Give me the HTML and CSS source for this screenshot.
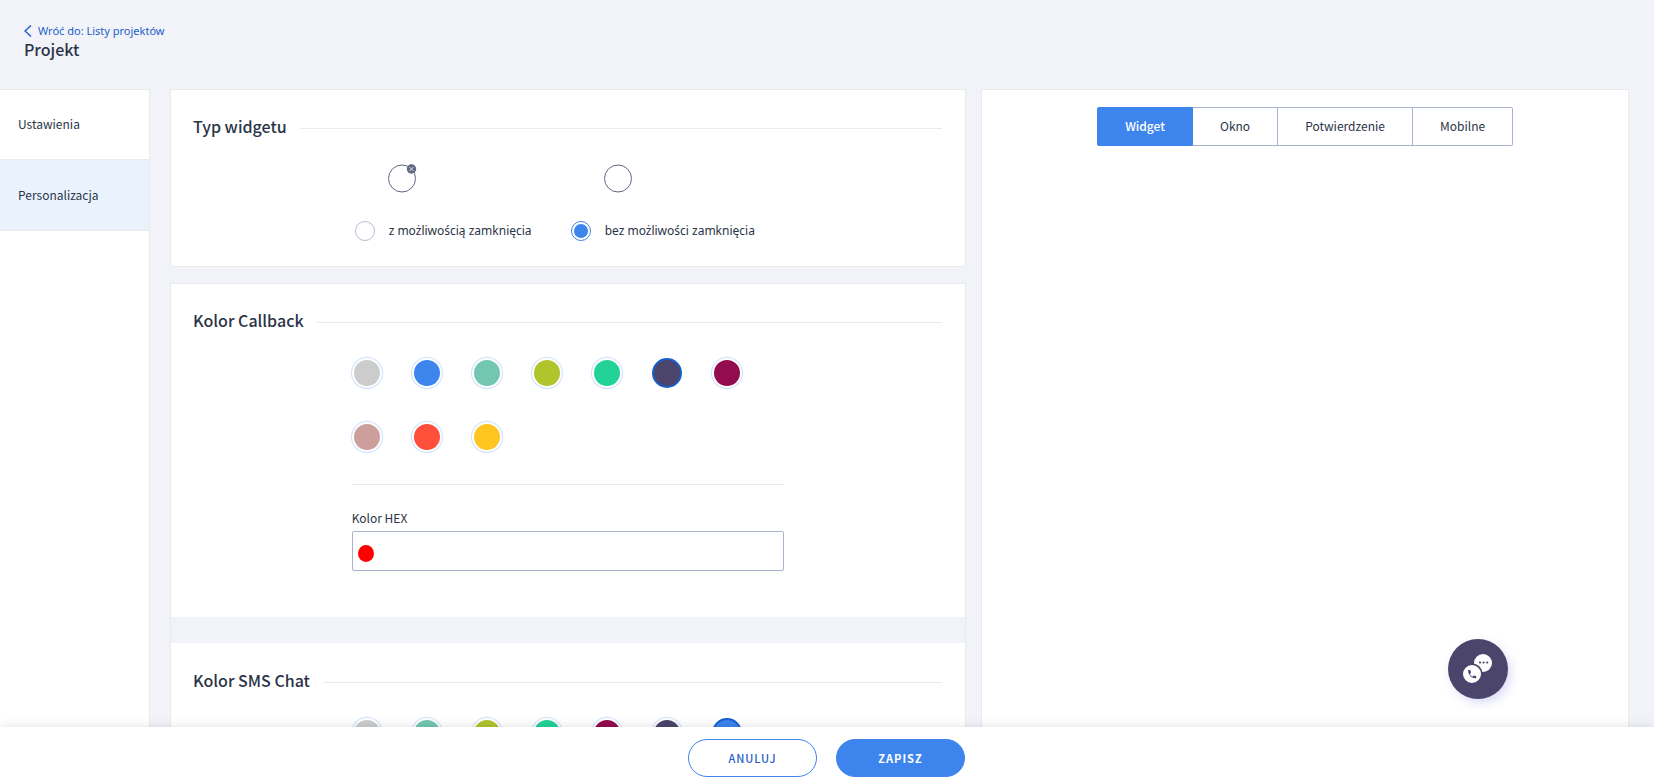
FILE: index.html
```html
<!DOCTYPE html>
<html lang="pl">
<head>
  <meta charset="UTF-8">
  <meta name="viewport" content="width=device-width, initial-scale=1">
  <title>Projekt</title>
  <link rel="stylesheet" href="styles.css">
</head>
<body>
  <div class="page">
    <header class="header">
      <a class="back" href="#">
        <svg class="back-icon" width="8" height="12" viewBox="0 0 8 12"><path d="M7 0.5 L1 6 L7 11.5" fill="none" stroke="currentColor" stroke-width="1.4"/></svg>
        Wróć do: Listy projektów
      </a>
      <h1 class="header-title">Projekt</h1>
    </header>

    <div class="content">
      <nav class="sidebar">
        <a class="sidebar-item" href="#">Ustawienia</a>
        <a class="sidebar-item active" href="#">Personalizacja</a>
      </nav>

      <main class="settings">
        <div class="card">
          <section class="section">
            <h2 class="section-title">Typ widgetu</h2>
            <div class="section-body types">
              <label class="type">
                <svg class="type-icon" width="30" height="30" viewBox="0 0 30 30">
                  <circle cx="15" cy="15.5" r="13.5" fill="none" stroke="#5f6782"/>
                  <circle cx="24.5" cy="6" r="4.7" fill="#5f6782"/>
                  <path d="M22.5 4 L26.5 8 M26.5 4 L22.5 8" stroke="#fff" stroke-width="0.8"/>
                </svg>
                <input class="radio" type="radio" name="type">
                <span class="type-name">z możliwością zamknięcia</span>
              </label>
              <label class="type">
                <svg class="type-icon" width="30" height="30" viewBox="0 0 30 30">
                  <circle cx="15" cy="15.5" r="13.5" fill="none" stroke="#5f6782"/>
                </svg>
                <input class="radio" type="radio" name="type" checked>
                <span class="type-name">bez możliwości zamknięcia</span>
              </label>
            </div>
          </section>
        </div>

        <div class="card">
          <section class="section">
            <h2 class="section-title">Kolor Callback</h2>
            <div class="section-body">
              <div class="swatches">
                <input class="swatch gray" type="radio" name="callback" aria-label="#cccccc">
                <input class="swatch blue" type="radio" name="callback" aria-label="#3d84ed">
                <input class="swatch teal" type="radio" name="callback" aria-label="#73c6b1">
                <input class="swatch lime" type="radio" name="callback" aria-label="#b0c42c">
                <input class="swatch green" type="radio" name="callback" aria-label="#23d297">
                <input class="swatch violet" type="radio" name="callback" aria-label="#4b456c" checked>
                <input class="swatch plum" type="radio" name="callback" aria-label="#920c4f">
                <input class="swatch rose" type="radio" name="callback" aria-label="#cc9e9c">
                <input class="swatch red" type="radio" name="callback" aria-label="#ff4e39">
                <input class="swatch yellow" type="radio" name="callback" aria-label="#ffc520">
              </div>
              <div class="hex">
                <label class="hex-label" for="hex">Kolor HEX</label>
                <div class="hex-field">
                  <span class="hex-preview"></span>
                  <input class="hex-input" type="text" id="hex">
                </div>
              </div>
            </div>
          </section>
          <div class="divider"></div>
          <section class="section">
            <h2 class="section-title">Kolor SMS Chat</h2>
            <div class="section-body">
              <div class="swatches">
                <input class="swatch gray" type="radio" name="sms" aria-label="#cccccc">
                <input class="swatch teal" type="radio" name="sms" aria-label="#73c6b1">
                <input class="swatch lime" type="radio" name="sms" aria-label="#b0c42c">
                <input class="swatch green" type="radio" name="sms" aria-label="#23d297">
                <input class="swatch plum" type="radio" name="sms" aria-label="#920c4f">
                <input class="swatch violet" type="radio" name="sms" aria-label="#4b456c">
                <input class="swatch blue" type="radio" name="sms" aria-label="#3d84ed" checked>
              </div>
            </div>
          </section>
        </div>
      </main>

      <aside class="preview">
        <div class="tabs">
          <button class="tab active" type="button">Widget</button>
          <button class="tab" type="button">Okno</button>
          <button class="tab" type="button">Potwierdzenie</button>
          <button class="tab" type="button">Mobilne</button>
        </div>
        <button class="widget" type="button" aria-label="Widget">
          <svg width="60" height="60" viewBox="0 0 60 60">
            <circle cx="35" cy="24" r="9" fill="#fff"/>
            <circle cx="32" cy="23.5" r="1.1" fill="#4b456c"/>
            <circle cx="35.6" cy="23.5" r="1.1" fill="#4b456c"/>
            <circle cx="39.2" cy="23.5" r="1.1" fill="#4b456c"/>
            <circle cx="24" cy="35" r="9.8" fill="#fff" stroke="#4b456c" stroke-width="1.6"/>
            <path d="M20 31 L22.4 31 L23 34 L21.8 35 Q22.8 37 24.6 37.7 L25.6 36.4 L28.2 37 L28.2 39.2 Q25 39.8 22.4 37.2 Q19.8 34.4 20 31 Z" fill="#4b456c"/>
          </svg>
        </button>
      </aside>
    </div>

    <footer class="footer">
      <button class="btn btn-outline" type="button">ANULUJ</button>
      <button class="btn btn-primary" type="button">ZAPISZ</button>
    </footer>
  </div>
</body>
</html>
```
FILE: styles.css
```css
* {
  box-sizing: border-box;
}
body {
  margin: 0;
  font-family: "Noto Sans CJK SC", "Noto Sans", sans-serif;
  font-size: 12px;
  line-height: 20px;
  color: #2b3447;
  background-color: #f2f3f8;
}
button, input {
  font: inherit;
  color: inherit;
  margin: 0;
}
a {
  color: inherit;
  text-decoration: none;
}
.page {
  display: flex;
  flex-direction: column;
  height: 100vh;
  overflow: hidden;
}

/* header */
.header {
  flex: none;
  padding: 23px 24px 30px;
}
.back {
  display: flex;
  align-items: center;
  gap: 6px;
  font-size: 11px;
  line-height: 16px;
  color: #1b60c9;
}
/* these strings need the full Polish alphabet */
.back, .type-name {
  font-family: "Noto Sans", sans-serif;
}
.header-title {
  margin: 0;
  font-size: 16px;
  font-weight: 500;
  line-height: 20px;
}

/* columns */
.content {
  flex: 1;
  min-height: 0;
  display: grid;
  grid-template-columns: 170px 55fr 45fr;
  grid-template-rows: minmax(0, 1fr);
  padding-right: 9px;
}
.sidebar {
  margin-right: 20px;
  background-color: #fff;
  border: solid #e8eaec;
  border-width: 1px 1px 0 0;
}
.sidebar-item {
  display: block;
  padding: 24px 18px 25px;
  border-bottom: 1px solid #e8eaec;
}
.sidebar-item.active {
  padding: 25px 18px;
  background-color: #eaf3fd;
}
.settings {
  min-width: 0;
  padding-right: 15px;
}
.card {
  margin-bottom: 16px;
  background-color: #fff;
  border: 1px solid #e8eaec;
}
.section {
  padding: 24px 23px 25px 22px;
}
.section-title {
  display: flex;
  align-items: center;
  gap: 13px;
  margin: 0;
  padding-bottom: 4px;
  font-size: 16px;
  font-weight: 500;
  line-height: 24px;
}
.section-title::after {
  content: "";
  flex: 1;
  margin-top: 4px;
  border-top: 1px solid #e8eaec;
}
.section-body {
  width: 432px;
  max-width: 100%;
  margin: 0 auto;
}
.divider {
  height: 26px;
  background-color: #f2f3f8;
}
.divider + .section {
  padding-top: 25px;
}

/* widget type */
.types {
  display: grid;
  grid-template-columns: 1fr 1fr;
  padding-top: 21px;
}
.type {
  display: grid;
  grid-template-columns: 20px 1fr;
  align-items: center;
  gap: 28px 14px;
  padding-left: 3px;
  white-space: nowrap;
  cursor: pointer;
}
.type-icon {
  grid-column: 2;
  margin-left: -2px;
}
.radio {
  appearance: none;
  width: 20px;
  height: 20px;
  padding: 2px;
  border: 1px solid #b5bdd6;
  border-radius: 50%;
}
.radio:checked {
  border-color: #3d84ed;
  background: #3d84ed content-box;
}

/* colors */
.swatches {
  display: grid;
  grid-template-columns: repeat(auto-fill, 60px);
  row-gap: 38px;
  padding: 24px 0 34px 2px;
}
.swatch {
  appearance: none;
  width: 26px;
  height: 26px;
  border-radius: 50%;
  box-shadow: 0 0 0 2px #fff, 0 0 1px 3px #cbdffb;
  cursor: pointer;
}
.swatch:checked {
  box-shadow: 0 0 0 2px #1660cc;
}
.gray { background-color: #ccc; }
.blue { background-color: #3d84ed; }
.teal { background-color: #73c6b1; }
.lime { background-color: #b0c42c; }
.green { background-color: #23d297; }
.violet { background-color: #4b456c; }
.plum { background-color: #920c4f; }
.rose { background-color: #cc9e9c; }
.red { background-color: #ff4e39; }
.yellow { background-color: #ffc520; }

.hex {
  padding: 23px 0 21px;
  border-top: 1px solid #e8eaec;
}
.hex-label {
  display: block;
  margin-bottom: 3px;
}
.hex-field {
  display: flex;
  align-items: center;
  gap: 8px;
  height: 40px;
  padding: 0 5px;
  border: 1px solid #a9b3cf;
  border-radius: 2px;
}
.hex-preview {
  width: 16px;
  height: 17px;
  margin-top: 4px;
  border-radius: 50%;
  background-color: #f00;
}
.hex-input {
  flex: 1;
  min-width: 0;
  height: 36px;
  border: 0;
  outline: 0;
  background: none;
}

/* preview */
.preview {
  position: relative;
  margin-right: 16px;
  padding-top: 17px;
  background-color: #fff;
  border: solid #e8eaec;
  border-width: 1px 1px 0;
}
.tabs {
  display: flex;
  justify-content: center;
}
.tab {
  height: 39px;
  padding: 0 27px 2px;
  background-color: #fff;
  border: 1px solid #a9b3cf;
  border-left-width: 0;
  cursor: pointer;
}
.tab:last-child {
  border-radius: 0 2px 2px 0;
}
.tab.active {
  color: #fff;
  font-weight: 500;
  background-color: #3d84ed;
  border-color: #3d84ed;
  border-left-width: 1px;
  border-radius: 2px 0 0 2px;
}
.widget {
  position: absolute;
  right: 120px;
  bottom: 28px;
  width: 60px;
  height: 60px;
  padding: 0;
  border: 0;
  border-radius: 50%;
  background-color: #4b456c;
  box-shadow: 3px 4px 10px rgba(80, 80, 220, 0.2);
  cursor: pointer;
}

/* bottom bar */
.footer {
  position: relative;
  flex: none;
  display: flex;
  justify-content: center;
  gap: 19px;
  padding: 12px 1px 6px 0;
  background-color: #fff;
  box-shadow: 0 0 10px rgba(0, 0, 0, 0.12);
}
.btn {
  width: 129px;
  height: 38px;
  border: 1px solid #3d84ed;
  border-radius: 19px;
  font-size: 11px;
  letter-spacing: 1px;
  cursor: pointer;
}
.btn-outline {
  color: #1b60c9;
  font-weight: 500;
  background-color: #fff;
}
.btn-primary {
  color: #fff;
  font-weight: 700;
  background-color: #3d84ed;
}
```
